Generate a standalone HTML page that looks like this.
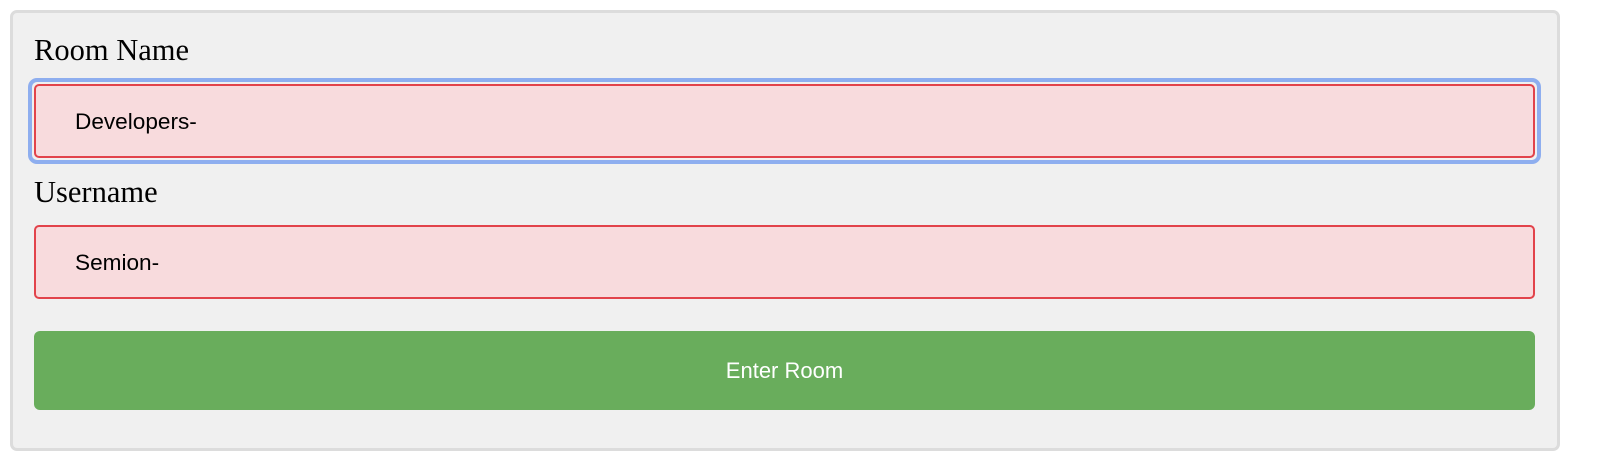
<!DOCTYPE html>
<html><head><meta charset="utf-8"><style>
html,body{margin:0;padding:0;background:#fff;width:1620px;height:474px;overflow:hidden}
.box{position:absolute;left:10px;top:10px;width:1544px;height:435px;border:3px solid #dcdcdc;border-radius:7px;background:#f0f0f0}
.lbl{position:absolute;left:34px;font-family:"Liberation Serif",serif;font-size:30.5px;color:#000;line-height:1}
.inp{position:absolute;left:34px;width:1497px;height:70px;border:2px solid #e2434b;border-radius:5px;background:#f8dbdd;box-sizing:content-box}
.inp span{position:absolute;left:39px;top:0;line-height:72px;font-family:"Liberation Sans",sans-serif;font-size:22.6px;color:#000}
.ring{position:absolute;left:28px;top:78px;width:1505px;height:78px;border:4px solid #8eaeef;border-radius:9px}
.btn{position:absolute;left:34px;top:331px;width:1501px;height:79px;background:#69ad5c;border-radius:6px;color:#fff;font-family:"Liberation Sans",sans-serif;font-size:22px;text-align:center;line-height:80px}
</style></head><body>
<div class="box"></div>
<div class="lbl" style="top:35px">Room Name</div>
<div class="ring"></div>
<div class="inp" style="top:84px"><span>Developers-</span></div>
<div class="lbl" style="top:177px">Username</div>
<div class="inp" style="top:225px"><span>Semion-</span></div>
<div class="btn">Enter Room</div>
</body></html>
